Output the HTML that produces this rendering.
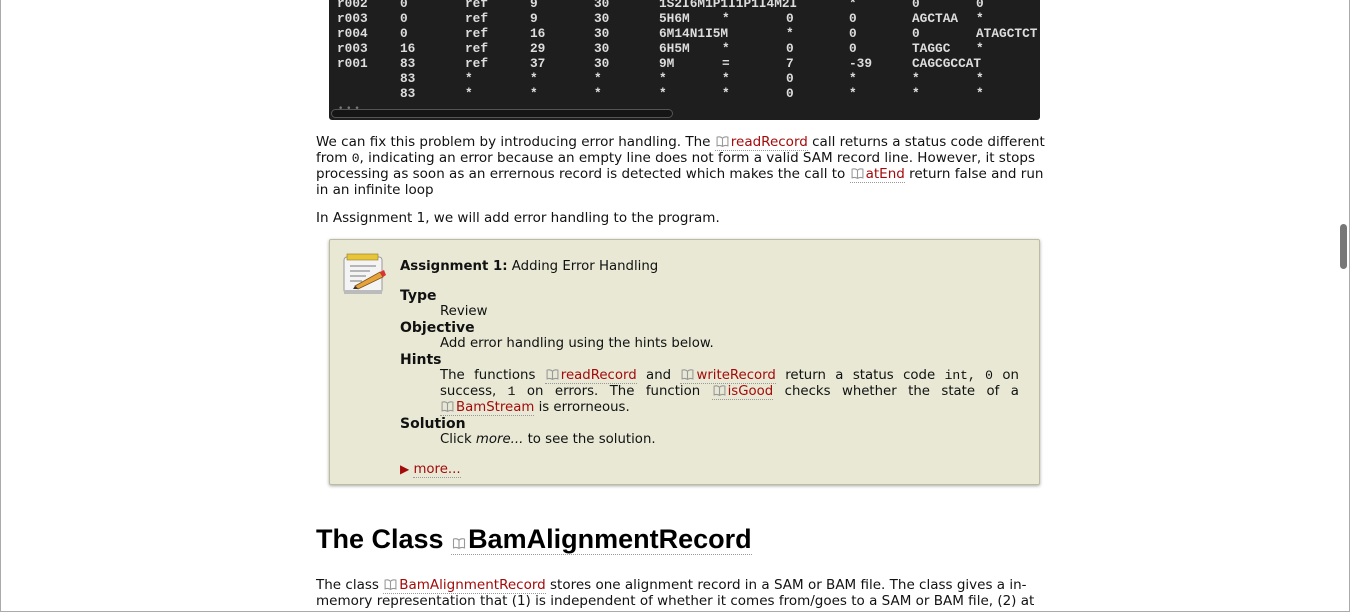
<!DOCTYPE html>
<html><head><meta charset="utf-8"><style>
*{margin:0;padding:0;box-sizing:border-box}
body{width:1350px;height:612px;overflow:hidden;background:#fff;position:relative;font-family:"DejaVu Sans","Liberation Sans",sans-serif;font-size:13.5px;color:#111}
.frame{position:absolute;left:0;top:0;width:1350px;height:612px;border-left:1px solid #aaa;border-right:1px solid #aaa;border-bottom:1px solid #aaa;pointer-events:none}
.l{position:absolute;white-space:nowrap;line-height:16px;height:16px}
.code{position:absolute;left:329px;top:0;width:711px;height:120px;background:#1e1e1e;border-radius:0 0 3px 3px}
.c{position:absolute;font-family:"Liberation Mono",monospace;font-weight:bold;font-size:12.8px;color:#ddd;line-height:15px}
.a{color:#a30b0b;border-bottom:1px dotted #999}
.bk{display:inline-block;width:13px;height:11px;vertical-align:-1px;margin:0 2px 0 1px}
.box{position:absolute;left:329px;top:239px;width:711px;height:246px;background:#e8e8d5;border:1px solid #bcbca0;border-radius:2px;box-shadow:0 1px 3px rgba(0,0,0,.35)}
.bx{font-family:"DejaVu Sans",sans-serif;font-size:13.3px}
.bx .h{font-size:14px}
b{font-weight:bold}
.mono{font-family:"Liberation Mono",monospace;font-size:13px}
</style></head><body>
<svg width="0" height="0" style="position:absolute"><defs><symbol id="book" viewBox="0 0 12 10"><path d="M6 2 C4.5 0.5 2.5 0.5 1 1 V9 C2.5 8.5 4.5 8.5 6 9.5 C7.5 8.5 9.5 8.5 11 9 V1 C9.5 0.5 7.5 0.5 6 2 Z M6 2 V9.5" fill="none" stroke="#999" stroke-width="1"/></symbol></defs></svg>

<div class="code">
<div class="c" style="left:8px;top:-4px">r002<br>r003<br>r004<br>r003<br>r001</div>
<div class="c" style="left:71px;top:-4px">0<br>0<br>0<br>16<br>83<br>83<br>83</div>
<div class="c" style="left:136px;top:-4px">ref<br>ref<br>ref<br>ref<br>ref<br>*<br>*</div>
<div class="c" style="left:201px;top:-4px">9<br>9<br>16<br>29<br>37<br>*<br>*</div>
<div class="c" style="left:265px;top:-4px">30<br>30<br>30<br>30<br>30<br>*<br>*</div>
<div class="c" style="left:330px;top:-4px">1S2I6M1P1I1P1I4M2I<br>5H6M<br>6M14N1I5M<br>6H5M<br>9M<br>*<br>*</div>
<div class="c" style="left:393px;top:-4px"><br>*<br><br>*<br>=<br>*<br>*</div>
<div class="c" style="left:457px;top:-4px"><br>0<br>*<br>0<br>7<br>0<br>0</div>
<div class="c" style="left:520px;top:-4px">*<br>0<br>0<br>0<br>-39<br>*<br>*</div>
<div class="c" style="left:583px;top:-4px">0<br>AGCTAA<br>0<br>TAGGC<br>CAGCGCCAT<br>*<br>*</div>
<div class="c" style="left:647px;top:-4px;width:64px;overflow:hidden">0<br>*<br>ATAGCTCT<br>*<br><br>*<br>*</div>
<div style="position:absolute;left:2px;top:109px;width:342px;height:9px;border:1px solid #555;border-radius:5px;background:#151515"><span style="position:absolute;left:6px;top:-6px;color:#777;font-size:9px">• • •</span></div>
</div>

<div class="l" style="left:316px;top:134px">We can fix this problem by introducing error handling. The <span class="a"><svg class="bk"><use href="#book"/></svg>readRecord</span> call returns a status code different</div>
<div class="l" style="left:316px;top:150px">from <span class="mono">0</span>, indicating an error because an empty line does not form a valid SAM record line. However, it stops</div>
<div class="l" style="left:316px;top:166px">processing as soon as an errernous record is detected which makes the call to <span class="a"><svg class="bk"><use href="#book"/></svg>atEnd</span> return false and run</div>
<div class="l" style="left:316px;top:182px">in an infinite loop</div>
<div class="l" style="left:316px;top:210px">In Assignment 1, we will add error handling to the program.</div>

<div class="box">
<svg style="position:absolute;left:12px;top:12px" width="46" height="46" viewBox="0 0 46 46">
<rect x="2" y="5" width="38" height="36" rx="3" fill="#f4f4f4" stroke="#999"/>
<rect x="2" y="38" width="38" height="4" fill="#bbb"/>
<rect x="5" y="2" width="31" height="6" fill="#e8c43a" stroke="#8a7a20" stroke-width=".6"/>
<g stroke="#777" stroke-width="1"><line x1="8" y1="14" x2="34" y2="14"/><line x1="8" y1="19" x2="28" y2="19"/><line x1="8" y1="24" x2="24" y2="24"/><line x1="8" y1="29" x2="20" y2="29"/></g>
<path d="M13 34 L38 20 L41 25 L16 37 Z" fill="#e6a33c" stroke="#7a5018" stroke-width=".8"/>
<path d="M38 20 L42 18 L44 23 L41 25Z" fill="#d33"/>
<path d="M13 34 L16 37 L11 37Z" fill="#333"/>
</svg>
</div>
<div class="bx">
<div class="l" style="left:400px;top:259px"><b>Assignment 1:</b> Adding Error Handling</div>
<div class="l h" style="left:400px;top:288px"><b>Type</b></div>
<div class="l" style="left:440px;top:304px">Review</div>
<div class="l h" style="left:400px;top:320px"><b>Objective</b></div>
<div class="l" style="left:440px;top:336px">Add error handling using the hints below.</div>
<div class="l h" style="left:400px;top:352px"><b>Hints</b></div>
<div class="l" style="left:440px;top:368px;width:579px;display:flex;justify-content:space-between"><span>The</span><span>functions</span><span class="a"><svg class="bk"><use href="#book"/></svg>readRecord</span><span>and</span><span class="a"><svg class="bk"><use href="#book"/></svg>writeRecord</span><span>return</span><span>a</span><span>status</span><span>code</span><span class="mono">int,</span><span class="mono">0</span><span>on</span></div>
<div class="l" style="left:440px;top:384px;width:579px;display:flex;justify-content:space-between"><span>success,</span><span class="mono">1</span><span>on</span><span>errors.</span><span>The</span><span>function</span><span class="a"><svg class="bk"><use href="#book"/></svg>isGood</span><span>checks</span><span>whether</span><span>the</span><span>state</span><span>of</span><span>a</span></div>
<div class="l" style="left:440px;top:400px"><span class="a"><svg class="bk"><use href="#book"/></svg>BamStream</span> is errorneous.</div>
<div class="l h" style="left:400px;top:416px"><b>Solution</b></div>
<div class="l" style="left:440px;top:432px">Click <i>more...</i> to see the solution.</div>
<div class="l" style="left:400px;top:461px"><span style="color:#a30b0b;font-size:12px">&#9654;</span> <span class="a">more...</span></div>
</div>

<div class="l" style="left:316px;top:522px;height:34px;line-height:34px;font-family:'Liberation Sans',sans-serif;font-weight:bold;font-size:27px;color:#000">The Class <span style="border-bottom:1px dotted #999"><svg class="bk" style="width:14px;height:11px"><use href="#book"/></svg>BamAlignmentRecord</span></div>

<div class="l" style="left:316px;top:577px">The class <span class="a"><svg class="bk"><use href="#book"/></svg>BamAlignmentRecord</span> stores one alignment record in a SAM or BAM file. The class gives a in-</div>
<div class="l" style="left:316px;top:593px">memory representation that (1) is independent of whether it comes from/goes to a SAM or BAM file, (2) at</div>

<div style="position:absolute;left:1340px;top:224px;width:7px;height:45px;background:#777;border-radius:4px"></div>
<div class="frame"></div>
</body></html>
